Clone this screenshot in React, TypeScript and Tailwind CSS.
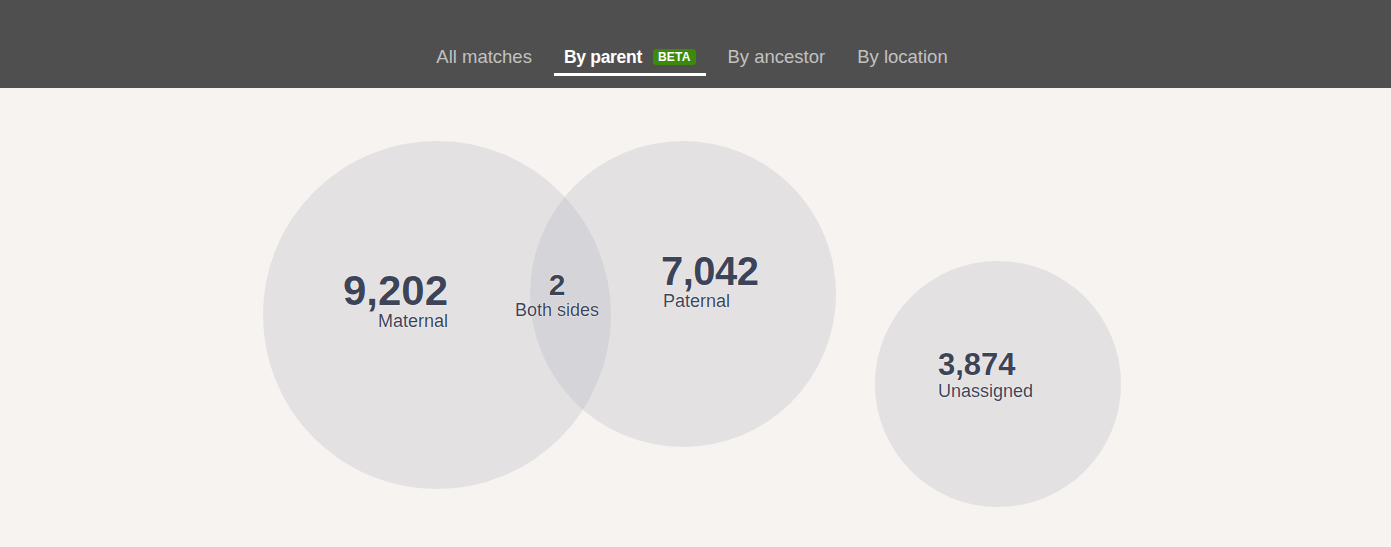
import React from 'react'

const tabs = [
  { label: 'All matches', active: false },
  { label: 'By parent', active: true, badge: 'BETA' },
  { label: 'By ancestor', active: false },
  { label: 'By location', active: false },
]

const halo = '[text-shadow:0_0_1px_#fff,0_0_1px_#fff,0_0_1px_#fff]'

export default function App() {
  return (
    <div className="min-h-[547px] bg-[#f6f3f0] font-['Liberation_Sans',Arial,sans-serif]">
      {/* Tabs */}
      <div className="h-[88px] bg-[#4f4f4f] flex justify-center items-end pb-[12px]">
        <nav className="flex gap-3 mr-[7px]">
          {tabs.map(t => (
            <div
              key={t.label}
              className={
                'px-[10px] pb-1 border-b-[3px] flex items-center gap-[11px] ' +
                (t.active ? 'border-white' : 'border-transparent')
              }
            >
              <span
                className={
                  'leading-[24px] ' +
                  (t.active
                    ? 'text-white font-bold text-[17.5px] tracking-[-0.3px]'
                    : 'text-[#c2c2c2] text-[18.5px]')
                }
              >
                {t.label}
              </span>
              {t.badge && (
                <span className="bg-[#3b8a0c] text-white text-[12px] font-bold leading-[16px] px-[5px] rounded-[3px] tracking-[0.2px]">
                  {t.badge}
                </span>
              )}
            </div>
          ))}
        </nav>
      </div>

      {/* Venn diagram */}
      <div className="relative w-[1391px] h-[459px] mx-auto text-[#3d4458]">
        <svg className="absolute inset-0" width="1391" height="459">
          <g fill="rgb(183,186,197)" fillOpacity="0.3">
            <circle cx="437" cy="227" r="174" />
            <circle cx="683" cy="206" r="153" />
            <circle cx="998" cy="296" r="123" />
          </g>
        </svg>

        <div className={'absolute left-[298px] top-[182px] w-[150px] text-right ' + halo}>
          <div className="text-[42px] leading-[42px] font-bold">9,202</div>
          <div className="text-[18px] leading-[18px]">Maternal</div>
        </div>

        <div className={'absolute left-[497px] top-[180px] w-[120px] text-center ' + halo}>
          <div className="text-[30px] leading-[33px] font-bold">2</div>
          <div className="text-[18px] leading-[18px]">Both sides</div>
        </div>

        <div className={'absolute left-[661px] top-[162px] ' + halo}>
          <div className="text-[40px] leading-[42px] font-bold tracking-[-0.5px]">7,042</div>
          <div className="text-[18px] leading-[18px] ml-[2px]">Paternal</div>
        </div>

        <div className={'absolute left-[938px] top-[259px] ' + halo}>
          <div className="text-[31px] leading-[35px] font-bold">3,874</div>
          <div className="text-[18px] leading-[18px]">Unassigned</div>
        </div>
      </div>
    </div>
  )
}
